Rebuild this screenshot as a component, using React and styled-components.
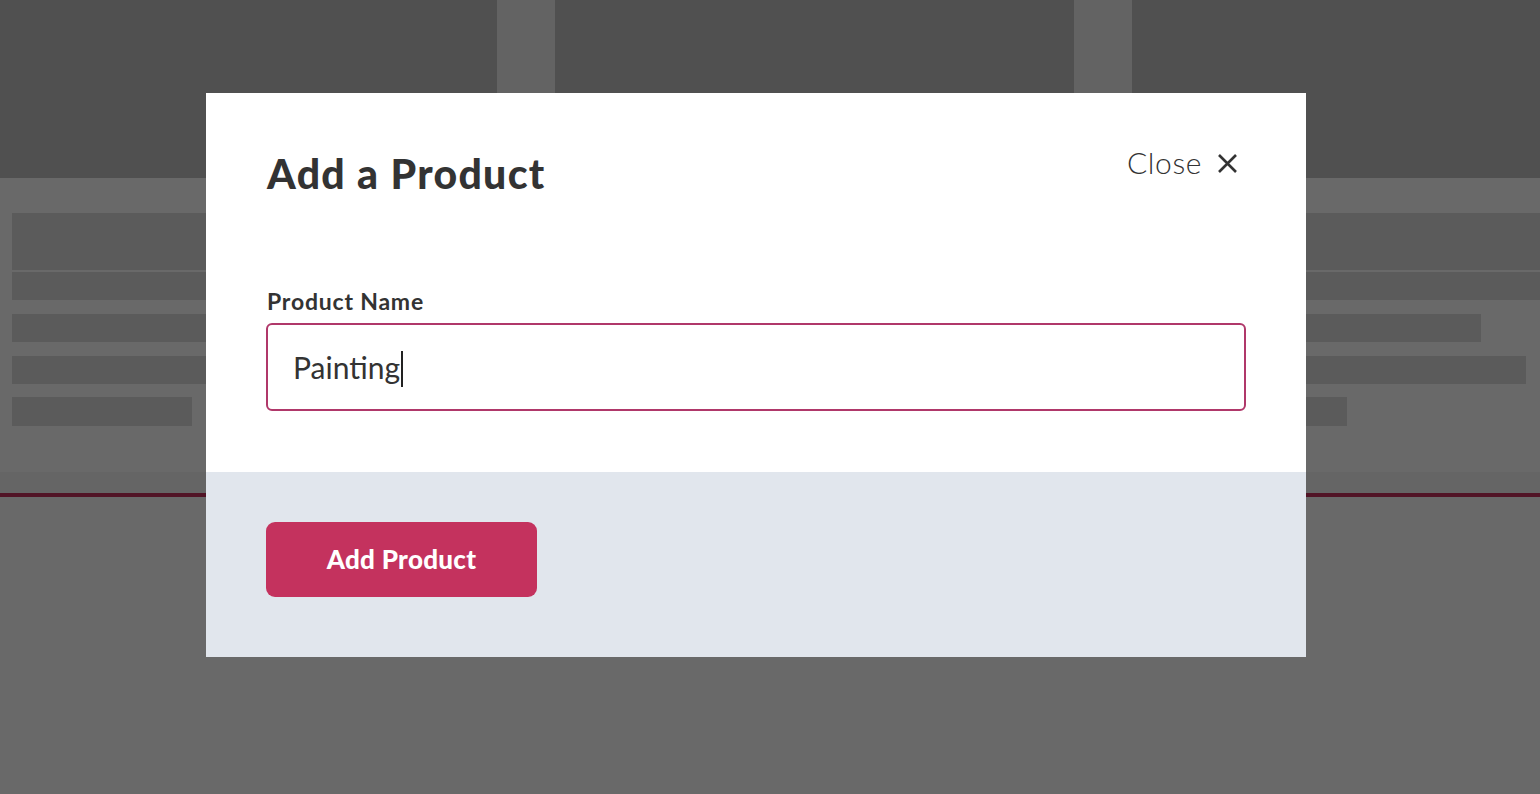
import React from 'react'
import styled, { createGlobalStyle } from 'styled-components'

const GlobalStyle = createGlobalStyle`
  html, body {
    margin: 0;
    padding: 0;
    background: #ffffff;
    font-family: "Lato", "Open Sans", sans-serif;
    color: #333333;
  }
  * {
    box-sizing: border-box;
  }
`

// page behind the modal

const Page = styled.div`
  width: 100%;
  min-height: 794px;
  background: #ffffff;
`

const Header = styled.header`
  height: 178px;
  display: grid;
  grid-template-columns: 497px 58px 519px 58px 1fr;
  background: #c3c3c3;
`

const HeaderStripe = styled.div`
  background: ${p => (p.$light ? '#f1f1f1' : 'transparent')};
`

const Listing = styled.section`
  height: 294px;
  padding: 35px 0 0 12px;
  display: flex;
  flex-direction: column;
`

const Bar = styled.div`
  height: ${p => p.$h}px;
  width: ${p => p.$w || 'auto'};
  margin-top: ${p => p.$mt || 0}px;
  background: #dcdcdc;
  flex-shrink: 0;
`

const BarRow = styled.div`
  display: flex;
  justify-content: space-between;
  width: 1335px;
  margin-top: 13px;
`

const Strip = styled.div`
  height: 25px;
  background: #f4f4f4;
  border-bottom: 4px solid #c4325e;
`

const Overlay = styled.div`
  position: fixed;
  inset: 0;
  background: rgba(0, 0, 0, 0.59);
  padding: 93px 0 0 206px;
`

// modal

const Modal = styled.div`
  width: 1100px;
  background: #ffffff;
  display: flex;
  flex-direction: column;
`

const ModalBody = styled.div`
  padding: 51px 60px 61px 61px;
`

const ModalHead = styled.div`
  display: flex;
  justify-content: space-between;
  align-items: flex-start;
`

const Title = styled.h2`
  margin: 5px 0 0;
  font-family: "Lato", sans-serif;
  font-weight: 900;
  font-size: 41px;
  line-height: 1.2;
  color: #333333;
  letter-spacing: 1.3px;
`

const CloseButton = styled.button`
  display: flex;
  align-items: center;
  gap: 15px;
  margin-right: 8px;
  padding: 0;
  border: none;
  background: none;
  font-family: "Lato", sans-serif;
  font-weight: 300;
  font-size: 30px;
  line-height: 1.2;
  letter-spacing: 0.6px;
  color: #333333;
  cursor: pointer;
  svg {
    margin-top: 3px;
  }
`

const Field = styled.div`
  margin-top: 90px;
  margin-left: -1px;
  display: flex;
  flex-direction: column;
  gap: 7px;
`

const Label = styled.label`
  font-family: "Lato", sans-serif;
  font-weight: 700;
  font-size: 23px;
  line-height: 1.2;
  letter-spacing: 0.8px;
  color: #333333;
  padding-left: 1px;
`

const TextBox = styled.div`
  height: 88px;
  border: 2px solid #b0386a;
  border-radius: 6px;
  padding: 0 25px;
  display: flex;
  align-items: center;
  font-family: "Lato", sans-serif;
  font-size: 30px;
  color: #333333;
`

const Caret = styled.span`
  display: inline-block;
  width: 2px;
  height: 36px;
  margin-left: 1px;
  margin-top: 4px;
  background: #222222;
`

const ModalFooter = styled.div`
  background: #e1e6ed;
  padding: 50px 60px 60px 60px;
`

const PrimaryButton = styled.button`
  width: 271px;
  height: 75px;
  border: none;
  border-radius: 9px;
  background: #c4325e;
  color: #ffffff;
  font-family: "Lato", sans-serif;
  font-weight: 900;
  font-size: 26px;
  letter-spacing: 0.3px;
  cursor: pointer;
`

const CloseIcon = () => (
  <svg width="21" height="21" viewBox="0 0 21 21" fill="none">
    <path d="M2 2 L19 19 M19 2 L2 19" stroke="#333333" strokeWidth="2.6" strokeLinecap="butt" />
  </svg>
)

export default function App() {
  return (
    <>
      <GlobalStyle />
      <Page>
        <Header>
          <HeaderStripe />
          <HeaderStripe $light />
          <HeaderStripe />
          <HeaderStripe $light />
          <HeaderStripe />
        </Header>
        <Listing>
          <Bar $h={57} />
          <Bar $h={28} $mt={2} />
          <Bar $h={28} $mt={14} $w="1469px" />
          <Bar $h={28} $mt={14} $w="1514px" />
          <BarRow>
            <Bar $h={29} $w="180px" />
            <Bar $h={29} $w="640px" />
          </BarRow>
        </Listing>
        <Strip />
      </Page>

      <Overlay>
        <Modal role="dialog" aria-labelledby="add-product-title">
          <ModalBody>
            <ModalHead>
              <Title id="add-product-title">Add a Product</Title>
              <CloseButton type="button">
                Close
                <CloseIcon />
              </CloseButton>
            </ModalHead>
            <Field>
              <Label>Product Name</Label>
              <TextBox role="textbox">
                Painting
                <Caret />
              </TextBox>
            </Field>
          </ModalBody>
          <ModalFooter>
            <PrimaryButton type="button">Add Product</PrimaryButton>
          </ModalFooter>
        </Modal>
      </Overlay>
    </>
  )
}
